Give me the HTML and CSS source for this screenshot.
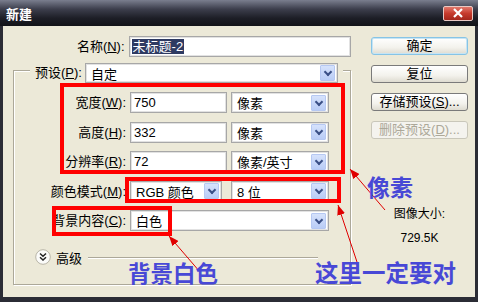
FILE: index.html
```html
<!DOCTYPE html>
<html lang="zh-CN">
<head>
    <meta charset="UTF-8">
    <title>新建</title>
    <link rel="stylesheet" href="styles.css">
</head>
<body>
    <div class="window">
        <div class="titlebar">
            <span class="title">新建</span>
            <span class="close"><svg width="12" height="10" viewBox="0 0 12 10"><path d="M2 1 L10 9 M10 1 L2 9" stroke="#fff" stroke-width="2.2"/></svg></span>
        </div>
        <div class="frame">
            <div class="left">
                <div class="name-row">
                    <span class="lbl">名称(<u>N</u>):</span>
                    <div class="field name"><span class="picked">未标题-2</span></div>
                </div>
                <div class="group">
                    <div class="preset">
                        <span class="plbl">预设(<u>P</u>):</span>
                        <div class="select w-preset"><span class="val">自定</span><i class="arrow"></i></div>
                    </div>
                    <div class="frow first">
                        <span class="flbl">宽度(<u>W</u>):</span>
                        <div class="field w-num">750</div>
                        <div class="select w-unit"><span class="val">像素</span><i class="arrow"></i></div>
                    </div>
                    <div class="frow">
                        <span class="flbl">高度(<u>H</u>):</span>
                        <div class="field w-num">332</div>
                        <div class="select w-unit"><span class="val">像素</span><i class="arrow"></i></div>
                    </div>
                    <div class="frow">
                        <span class="flbl">分辨率(<u>R</u>):</span>
                        <div class="field w-num">72</div>
                        <div class="select w-unit"><span class="val">像素/英寸</span><i class="arrow"></i></div>
                    </div>
                    <div class="frow">
                        <span class="flbl">颜色模式(<u>M</u>):</span>
                        <div class="select w-mode"><span class="val">RGB 颜色</span><i class="arrow"></i></div>
                        <div class="select w-unit wide-gap"><span class="val">8 位</span><i class="arrow"></i></div>
                    </div>
                    <div class="frow">
                        <span class="flbl">背景内容(<u>C</u>):</span>
                        <div class="select w-bg"><span class="val">白色</span><i class="arrow"></i></div>
                    </div>
                    <div class="adv">
                        <span class="adv-btn"><svg width="16" height="16" viewBox="0 0 16 16"><circle cx="8" cy="8" r="7.3" fill="#fbfbf9" stroke="#b8b5a8"/><path d="M5 4.5 L8 7.2 L11 4.5 M5 8.3 L8 11 L11 8.3" stroke="#222" stroke-width="1.5" fill="none"/></svg></span>
                        <span class="adv-text">高级</span>
                        <span class="rule"></span>
                    </div>
                </div>
            </div>
            <div class="right">
                <div class="btn default">确定</div>
                <div class="btn">复位</div>
                <div class="btn">存储预设(<u>S</u>)...</div>
                <div class="btn disabled">删除预设(<u>D</u>)...</div>
                <div class="info">图像大小:</div>
                <div class="info size">729.5K</div>
            </div>
        </div>

        <svg class="marks" width="478" height="302" viewBox="0 0 478 302">
            <defs>
                <marker id="head" viewBox="0 0 10 8" refX="10" refY="4" markerWidth="10" markerHeight="8" markerUnits="userSpaceOnUse" orient="auto">
                    <path d="M0 0 L10 4 L0 8 z" fill="#e00000"/>
                </marker>
            </defs>
            <rect x="62" y="85" width="281" height="87" fill="none" stroke="#f00" stroke-width="4"/>
            <rect x="127" y="179" width="212" height="22" fill="none" stroke="#f00" stroke-width="4"/>
            <rect x="54" y="208" width="116" height="26" fill="none" stroke="#f00" stroke-width="4"/>
            <line x1="385" y1="210" x2="350" y2="169" stroke="#e00000" stroke-width="1" marker-end="url(#head)"/>
            <line x1="357" y1="262" x2="338" y2="205" stroke="#e00000" stroke-width="1" marker-end="url(#head)"/>
            <line x1="200" y1="272" x2="169" y2="236" stroke="#e00000" stroke-width="1" marker-end="url(#head)"/>
        </svg>
        <span class="note note-px">像素</span>
        <span class="note note-bg">背景白色</span>
        <span class="note note-ok">这里一定要对</span>
    </div>
</body>
</html>
```

FILE: styles.css
```css
body { margin: 0; background: #ece9d8; }
.window { position: relative; width: 478px; height: 302px; overflow: hidden; background: #ece9d8; font-family: "Liberation Sans", "Noto Sans CJK SC", sans-serif; font-size: 13px; color: #000; }
u { text-decoration: underline; text-underline-offset: 1px; }

.titlebar { height: 26px; display: flex; align-items: center; background: linear-gradient(to bottom, #7a7e8e 0%, #3c3e4c 35%, #1d1e26 70%, #121318 100%); }
.title { padding-left: 6px; color: #fff; font-weight: bold; font-size: 13px; }
.close { margin-left: auto; margin-right: 5px; width: 28px; height: 13px; display: flex; align-items: center; justify-content: center; border: 1px solid #e9c9c4; border-radius: 2px; background: linear-gradient(to bottom, #e2786b, #c63a2c 50%, #a3261b); }

.frame { height: 276px; box-sizing: border-box; display: flex; border-left: 3px solid #2b2c35; border-right: 3px solid #2b2c35; border-bottom: 5px solid #2b2c35; padding-top: 10px; }
.left { width: 348px; }
.right { width: 97px; margin-left: 20px; }

.name-row { display: flex; height: 21px; }
.lbl { width: 123px; margin-right: 4px; text-align: right; line-height: 21px; }
.field { box-sizing: border-box; height: 21px; background: #fff; border: 1px solid #a7a7a7; box-shadow: inset 0 0 0 1px #e2e2e2; padding-left: 3px; line-height: 19px; }
.field.name { width: 225px; display: flex; align-items: center; padding-left: 2px; }
.picked { background: #2e3a62; color: #fff; line-height: 15px; padding: 0 1px; }

.group { box-sizing: border-box; margin: 13px 0 0 10px; width: 338px; height: 215px; border: 1px solid #aca899; box-shadow: inset 1px 1px 0 #fff, 1px 1px 0 #fff; }
.preset { display: flex; width: fit-content; margin: -8px 0 0 16px; padding: 0 5px; background: #ece9d8; }
.plbl { width: 50px; line-height: 20px; }

.select { box-sizing: border-box; height: 21px; display: flex; align-items: center; background: #fff; border: 1px solid #a7a7a7; box-shadow: inset 0 0 0 1px #e2e2e2; }
.select .val { flex: 1; padding-left: 5px; white-space: nowrap; }
.arrow { position: relative; width: 15px; height: 16px; margin-right: 2px; box-sizing: border-box; border: 1px solid #b6c8f2; border-radius: 1px; background: linear-gradient(to bottom, #d6e2fc, #b9ccf6); }
.arrow::after { content: ""; position: absolute; left: 4px; top: 3px; width: 4px; height: 4px; border-right: 2px solid #3a4f86; border-bottom: 2px solid #3a4f86; transform: rotate(45deg); }
.w-preset { width: 253px; height: 20px; }

.frow { display: flex; margin-top: 8.5px; height: 21px; }
.frow.first { margin-top: 9px; }
.flbl { width: 112px; margin-right: 4px; text-align: right; line-height: 21px; white-space: nowrap; }
.w-num { width: 97px; }
.w-unit { width: 98px; margin-left: 4px; }
.w-unit.wide-gap { margin-left: 9px; }
.w-mode { width: 92px; }
.w-bg { width: 199px; }

.adv { display: flex; align-items: center; height: 16px; margin-top: 18px; }
.adv-btn { margin-left: 21px; width: 16px; height: 16px; }
.adv-text { margin-left: 5px; }
.rule { flex: 1; margin: 1px 32px 0 6px; border-top: 1px solid #aca899; border-bottom: 1px solid #fff; }

.btn { box-sizing: border-box; height: 18px; margin-top: 10px; text-align: center; line-height: 16px; border: 1px solid #7a7a7a; border-radius: 3px; background: linear-gradient(to bottom, #ffffff, #f3f2ec 60%, #dedbd0); }
.btn:first-child { margin-top: 1px; }
.btn.default { border-color: #86c4e6; box-shadow: inset 0 0 0 1px #c6e4f4; }
.btn.disabled { color: #aca899; border-color: #c9c7ba; background: #f4f3ee; }
.info { text-align: center; font-size: 12px; line-height: 16px; margin-top: 67px; }
.info.size { margin-top: 8px; }

.marks { position: absolute; left: 0; top: 0; pointer-events: none; }
.note { position: absolute; color: #4848d6; font-family: "Noto Sans CJK SC", sans-serif; font-weight: bold; line-height: 1; white-space: nowrap; }
.note-px { left: 367px; top: 175px; font-size: 23px; }
.note-bg { left: 128px; top: 261px; font-size: 22.5px; }
.note-ok { left: 315px; top: 261px; font-size: 23.5px; }
```
